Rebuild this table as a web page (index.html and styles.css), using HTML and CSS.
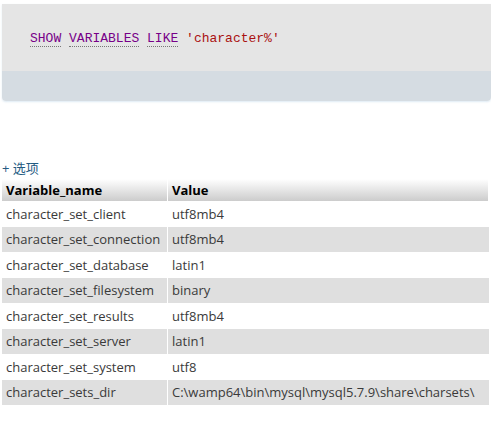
FILE: index.html
```html
<!DOCTYPE html>
<html>
<head>
<meta charset="utf-8">
<link rel="stylesheet" href="styles.css">
</head>
<body>
<div class="sqlbox">
  <div class="code"><span class="kw">SHOW</span> <span class="kw">VARIABLES</span> <span class="kw">LIKE</span> <span class="str">'character%'</span></div>
  <div class="tools"></div>
</div>
<div class="options"><a href="#">+ 选项</a></div>
<table class="data">
  <thead>
    <tr><th>Variable_name</th><th>Value</th></tr>
  </thead>
  <tbody>
    <tr><td>character_set_client</td><td>utf8mb4</td></tr>
    <tr><td>character_set_connection</td><td>utf8mb4</td></tr>
    <tr><td>character_set_database</td><td>latin1</td></tr>
    <tr><td>character_set_filesystem</td><td>binary</td></tr>
    <tr><td>character_set_results</td><td>utf8mb4</td></tr>
    <tr><td>character_set_server</td><td>latin1</td></tr>
    <tr><td>character_set_system</td><td>utf8</td></tr>
    <tr><td>character_sets_dir</td><td>C:\wamp64\bin\mysql\mysql5.7.9\share\charsets\</td></tr>
  </tbody>
</table>
</body>
</html>
```
FILE: styles.css
```css
html, body { margin: 0; padding: 0; background: #fff; }
body { font-family: "Open Sans", "Noto Sans CJK SC", sans-serif; font-size: 13px; color: #3a3a3a; }
.sqlbox { margin: 4px 0 0 2px; border-radius: 0 0 4px 4px; overflow: hidden; box-shadow: 0 1px 2px rgba(200,220,235,0.6); }
.code { background: #e5e5e5; height: 67px; box-sizing: border-box; padding: 27px 0 0 28px; font-family: "Liberation Mono", monospace; font-size: 13px; line-height: 16px; }
.kw { color: #770088; border-bottom: 1px dotted #777; }
.str { color: #aa1111; }
.tools { background: #d5dce2; height: 30px; }
.options { margin: 59px 0 0 2px; line-height: 17px; }
.options a { color: #235a81; text-decoration: none; font-size: 13px; }
.data { margin: 2px 0 0 2px; border-collapse: separate; border-spacing: 0; width: 487px; }
.data th { text-align: left; font-weight: bold; color: #000; height: 22px; padding: 0 4px; background: linear-gradient(#fff, #ccc); border-right: 1px solid #fff; }
.data td { height: 25.5px; padding: 0 4px; white-space: nowrap; }
.data tbody tr:nth-child(even) td { background: #dfdfdf; }
.data th:first-child, .data td:first-child { width: 157px; border-right: 1px solid #fff; }
```
